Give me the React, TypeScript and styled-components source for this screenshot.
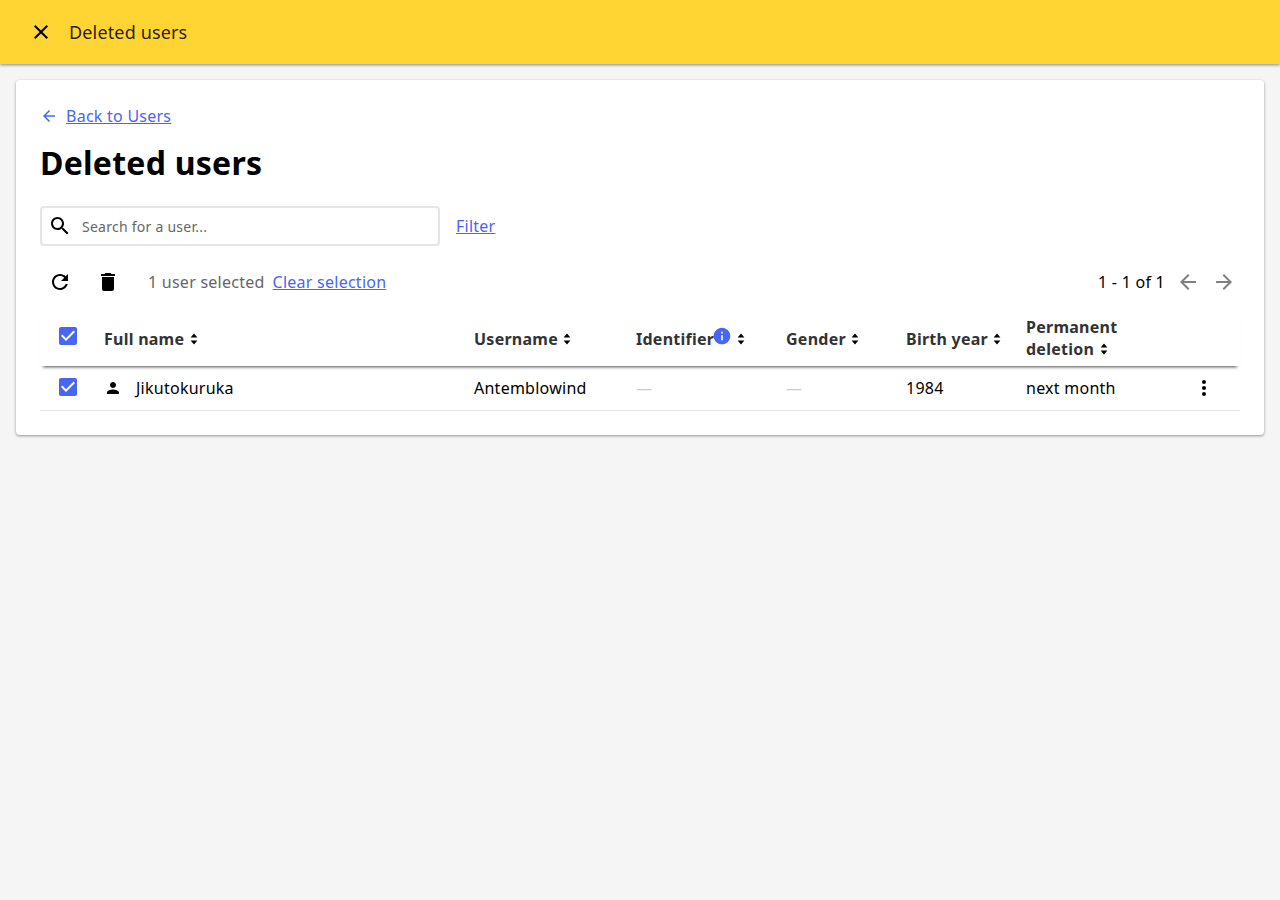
import React from 'react';
import styled, { createGlobalStyle } from 'styled-components';

const GlobalStyle = createGlobalStyle`
  html, body {
    margin: 0;
    padding: 0;
    background-color: #f5f5f5;
    font-family: 'Noto Sans', sans-serif;
    letter-spacing: 0.25px;
    color: #000;
  }
`;

const paths = {
  close: 'M19 6.41 17.59 5 12 10.59 6.41 5 5 6.41 10.59 12 5 17.59 6.41 19 12 13.41 17.59 19 19 17.59 13.41 12z',
  back: 'M20 11H7.83l5.59-5.59L12 4l-8 8 8 8 1.41-1.41L7.83 13H20v-2z',
  forward: 'm12 4-1.41 1.41L16.17 11H4v2h12.17l-5.58 5.59L12 20l8-8z',
  search:
    'M15.5 14h-.79l-.28-.27C15.41 12.59 16 11.11 16 9.5 16 5.91 13.09 3 9.5 3S3 5.91 3 9.5 5.91 16 9.5 16c1.61 0 3.09-.59 4.23-1.57l.27.28v.79l5 4.99L20.49 19l-4.99-5zm-6 0C7.01 14 5 11.99 5 9.5S7.01 5 9.5 5 14 7.01 14 9.5 11.99 14 9.5 14z',
  refresh:
    'M17.65 6.35C16.2 4.9 14.21 4 12 4c-4.42 0-7.99 3.58-7.99 8s3.57 8 7.99 8c3.73 0 6.84-2.55 7.73-6h-2.08c-.82 2.33-3.04 4-5.65 4-3.31 0-6-2.69-6-6s2.69-6 6-6c1.66 0 3.14.69 4.22 1.78L13 11h7V4l-2.35 2.35z',
  trash: 'M6 19c0 1.1.9 2 2 2h8c1.1 0 2-.9 2-2V7H6v12zM19 4h-3.5l-1-1h-5l-1 1H5v2h14V4z',
  person: 'M12 12c2.21 0 4-1.79 4-4s-1.79-4-4-4-4 1.79-4 4 1.79 4 4 4zm0 2c-2.67 0-8 1.34-8 4v2h16v-2c0-2.66-5.33-4-8-4z',
  more: 'M12 8c1.1 0 2-.9 2-2s-.9-2-2-2-2 .9-2 2 .9 2 2 2zm0 2c-1.1 0-2 .9-2 2s.9 2 2 2 2-.9 2-2-.9-2-2-2zm0 6c-1.1 0-2 .9-2 2s.9 2 2 2 2-.9 2-2-.9-2-2-2z',
  info: 'M12 2C6.48 2 2 6.48 2 12s4.48 10 10 10 10-4.48 10-10S17.52 2 12 2zm1 15h-2v-6h2v6zm0-8h-2V7h2v2z',
  checkbox:
    'M19 3H5c-1.11 0-2 .9-2 2v14c0 1.1.89 2 2 2h14c1.11 0 2-.9 2-2V5c0-1.1-.89-2-2-2zm-9 14l-5-5 1.41-1.41L10 14.17l7.59-7.59L19 8l-9 9z',
};

function Icon({ name, size = 24, color = 'currentColor' }: { name: keyof typeof paths; size?: number; color?: string }) {
  return (
    <svg width={size} height={size} viewBox="0 0 24 24" fill={color} style={{ display: 'block', flexShrink: 0 }}>
      <path d={paths[name]} />
    </svg>
  );
}

function SortIcon() {
  return (
    <SortGlyph width="8" height="14" viewBox="0 0 8 14" fill="#000">
      <path d="M4 1.4 7.4 5.6H.6zM4 12.6.6 8.4h6.8z" />
    </SortGlyph>
  );
}

function App() {
  return (
    <>
      <GlobalStyle />
      <AppBar>
        <IconButton>
          <Icon name="close" />
        </IconButton>
        <BarTitle>Deleted users</BarTitle>
      </AppBar>
      <Main>
        <Card>
          <BackRow>
            <Icon name="back" size={18} color="#4766f6" />
            <TextLink>Back to Users</TextLink>
          </BackRow>
          <Heading>Deleted users</Heading>
          <SearchRow>
            <SearchBox>
              <Icon name="search" />
              <SearchInput placeholder="Search for a user..." readOnly />
            </SearchBox>
            <TextLink>Filter</TextLink>
          </SearchRow>
          <Toolbar>
            <ActionGroup>
              <ToolButton>
                <Icon name="refresh" />
              </ToolButton>
              <ToolButton>
                <Icon name="trash" />
              </ToolButton>
              <SelectedText>1 user selected</SelectedText>
              <TextLink>Clear selection</TextLink>
            </ActionGroup>
            <Pager>
              <PagerText>1 - 1 of 1</PagerText>
              <PagerButton>
                <Icon name="back" />
              </PagerButton>
              <PagerButton>
                <Icon name="forward" />
              </PagerButton>
            </Pager>
          </Toolbar>
          <Table>
            <colgroup>
              <col width="56" />
              <col width="370" />
              <col width="162" />
              <col width="150" />
              <col width="120" />
              <col width="120" />
              <col width="160" />
              <col width="62" />
            </colgroup>
            <thead>
              <HeadRow>
                <CheckHead>
                  <CheckWrap>
                    <Icon name="checkbox" color="#4766f6" />
                  </CheckWrap>
                </CheckHead>
                <HeadCell>
                  Full name <SortIcon />
                </HeadCell>
                <HeadCell>
                  Username <SortIcon />
                </HeadCell>
                <HeadCell $tall>
                  Identifier
                  <InfoBadge>
                    <Icon name="info" size={20} color="#4766f6" />
                  </InfoBadge>
                  <SortIcon />
                </HeadCell>
                <HeadCell>
                  Gender <SortIcon />
                </HeadCell>
                <HeadCell>
                  Birth year <SortIcon />
                </HeadCell>
                <HeadCell $tall>
                  Permanent
                  <br />
                  deletion <SortIcon />
                </HeadCell>
                <HeadCell />
              </HeadRow>
            </thead>
            <tbody>
              <BodyRow>
                <CheckCell>
                  <CheckWrap>
                    <Icon name="checkbox" color="#4766f6" />
                  </CheckWrap>
                </CheckCell>
                <Cell>
                  <NameWrap>
                    <Icon name="person" size={18} />
                    Jikutokuruka
                  </NameWrap>
                </Cell>
                <Cell>Antemblowind</Cell>
                <Cell>
                  <Dash>—</Dash>
                </Cell>
                <Cell>
                  <Dash>—</Dash>
                </Cell>
                <Cell>1984</Cell>
                <Cell>next month</Cell>
                <MenuCell>
                  <Icon name="more" />
                </MenuCell>
              </BodyRow>
            </tbody>
          </Table>
        </Card>
      </Main>
    </>
  );
}

const AppBar = styled.header`
  height: 64px;
  background-color: #ffd533;
  display: flex;
  align-items: center;
  padding-left: 29px;
  box-shadow: 0 1px 3px rgba(0, 0, 0, 0.45);
`;

const IconButton = styled.div`
  width: 24px;
  height: 24px;
  color: #000;
`;

const BarTitle = styled.div`
  margin-left: 16px;
  font-size: 18px;
  line-height: 24px;
  letter-spacing: 0.15px;
  color: rgba(0, 0, 0, 0.87);
`;

const Main = styled.main`
  padding: 16px;
`;

const Card = styled.section`
  background-color: #fff;
  border-radius: 4px;
  padding: 24px;
  box-shadow: 0 1px 3px rgba(0, 0, 0, 0.4);
`;

const BackRow = styled.div`
  display: flex;
  align-items: center;
  gap: 8px;
  height: 24px;
`;

const TextLink = styled.a`
  font-size: 16px;
  line-height: 24px;
  color: #4766f6;
  text-decoration: underline;
  cursor: pointer;
`;

const Heading = styled.h1`
  margin: 13px 0 0;
  font-size: 32px;
  line-height: 44px;
  font-weight: 700;
  color: #000;
`;

const SearchRow = styled.div`
  display: flex;
  align-items: center;
  gap: 16px;
  margin-top: 21px;
`;

const SearchBox = styled.div`
  width: 400px;
  height: 40px;
  box-sizing: border-box;
  border: 2px solid #e6e6e6;
  border-radius: 4px;
  display: flex;
  align-items: center;
  padding-left: 6px;
  gap: 10px;
`;

const SearchInput = styled.input`
  flex: 1;
  border: none;
  outline: none;
  padding: 0;
  font-family: inherit;
  font-size: 14px;
  letter-spacing: inherit;
  color: #555;
  &::placeholder {
    color: #666;
    opacity: 1;
  }
`;

const Toolbar = styled.div`
  display: flex;
  align-items: center;
  justify-content: space-between;
  height: 48px;
  margin-top: 12px;
`;

const ActionGroup = styled.div`
  display: flex;
  align-items: center;
`;

const ToolButton = styled.div`
  width: 24px;
  height: 24px;
  padding: 0 12px 0 8px;
  margin-right: 4px;
  color: #000;
`;

const SelectedText = styled.span`
  margin: 0 8px 0 12px;
  font-size: 16px;
  color: #666;
`;

const Pager = styled.div`
  display: flex;
  align-items: center;
  padding-right: 4px;
`;

const PagerText = styled.span`
  font-size: 16px;
  margin-right: 11px;
`;

const PagerButton = styled.div`
  width: 24px;
  height: 24px;
  color: #808080;
  & + & {
    margin-left: 12px;
  }
`;

const Table = styled.table`
  width: 1200px;
  table-layout: fixed;
  border-collapse: collapse;
  margin-top: 4px;
`;

const HeadRow = styled.tr`
  height: 56px;
  box-shadow: 0 4px 3px -3px rgba(0, 0, 0, 0.7);
`;

const HeadCell = styled.th<{ $tall?: boolean }>`
  padding: ${({ $tall }) => ($tall ? '0' : '2px')} 0 0 8px;
  text-align: left;
  vertical-align: middle;
  font-size: 16px;
  line-height: 22px;
  font-weight: 700;
  color: #333;
`;

const CheckHead = styled(HeadCell)`
  padding: 0 0 4px 16px;
`;

const SortGlyph = styled.svg`
  display: inline-block;
  vertical-align: -1px;
  margin-left: 1px;
`;

const InfoBadge = styled.span`
  display: inline-block;
  vertical-align: -1px;
  margin: 0 4px 0 -2px;
  line-height: 0;
`;

const CheckWrap = styled.div`
  width: 24px;
  height: 24px;
`;

const BodyRow = styled.tr`
  height: 44px;
  border-bottom: 1px solid #e6e6e6;
`;

const Cell = styled.td`
  padding: 0 0 0 8px;
  font-size: 16px;
  color: #000;
`;

const CheckCell = styled(Cell)`
  padding: 0 0 2px 16px;
`;

const NameWrap = styled.div`
  display: flex;
  align-items: center;
  gap: 14px;
`;

const Dash = styled.span`
  color: #ccc;
`;

const MenuCell = styled(Cell)`
  padding-left: 14px;
`;

export default App;
